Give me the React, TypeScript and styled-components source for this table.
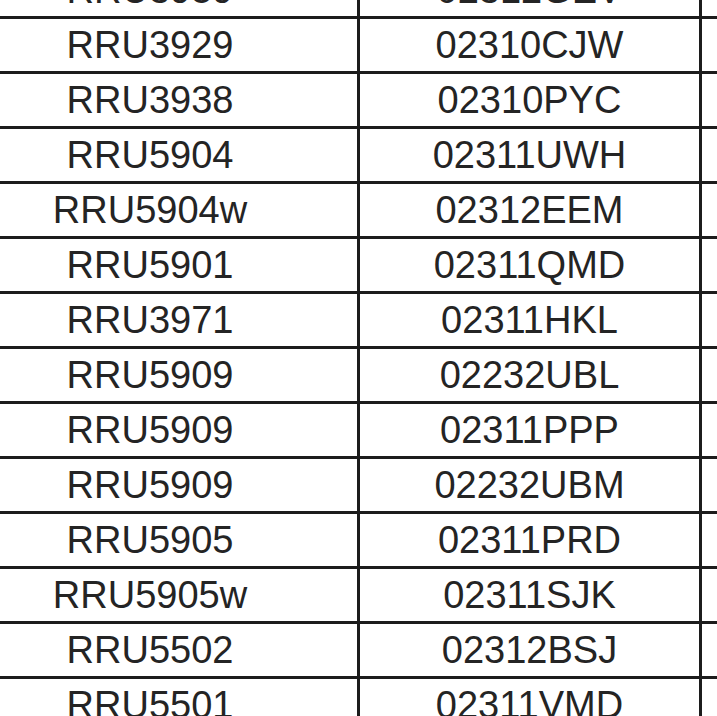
import styled, { createGlobalStyle } from "styled-components";

const rows: [string, string][] = [
    ["RRU3959", "02312GEV"],
    ["RRU3929", "02310CJW"],
    ["RRU3938", "02310PYC"],
    ["RRU5904", "02311UWH"],
    ["RRU5904w", "02312EEM"],
    ["RRU5901", "02311QMD"],
    ["RRU3971", "02311HKL"],
    ["RRU5909", "02232UBL"],
    ["RRU5909", "02311PPP"],
    ["RRU5909", "02232UBM"],
    ["RRU5905", "02311PRD"],
    ["RRU5905w", "02311SJK"],
    ["RRU5502", "02312BSJ"],
    ["RRU5501", "02311VMD"],
];

export default function App() {
    return (
        <>
            <GlobalStyle />
            <Viewport>
                <Sheet>
                    {rows.map(([model, code], i) => (
                        <Row key={i}>
                            <Cell>{model}</Cell>
                            <Cell>{code}</Cell>
                            <Cell />
                        </Row>
                    ))}
                </Sheet>
            </Viewport>
        </>
    )
}

const GlobalStyle = createGlobalStyle`
    html, body {
        margin: 0;
        padding: 0;
        background: #ffffff;
    }
`
// the sheet is a zoomed crop, so it starts above and left of the window
const Viewport = styled.div`
    width: 717px;
    height: 716px;
    overflow: hidden;
    background: #ffffff;
`
const Sheet = styled.div`
    display: flex;
    flex-direction: column;
    margin-top: -36px;
    margin-left: -57px;
`
const Row = styled.div`
    display: grid;
    grid-template-columns: 417px 342px 120px;
    height: 55px;
`
const Cell = styled.div`
    display: flex;
    align-items: center;
    justify-content: center;
    box-sizing: border-box;
    border-right: 3px solid #1c1c1c;
    border-bottom: 3px solid #1c1c1c;
    font-family: "Liberation Sans", Arial, sans-serif;
    font-size: 38px;
    color: #242424;
    white-space: nowrap;
`
